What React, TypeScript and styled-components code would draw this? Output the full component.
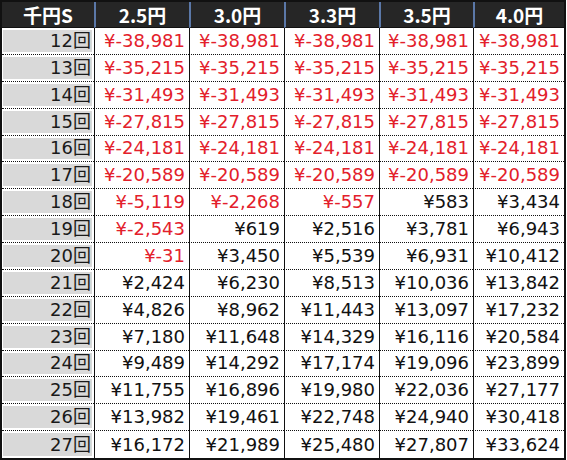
import React from 'react'
import { createGlobalStyle, styled } from 'styled-components'

const GlobalStyle = createGlobalStyle`
  html, body {
    margin: 0;
    padding: 0;
    background: #ffffff;
  }
`

const columns = ['2.5円', '3.0円', '3.3円', '3.5円', '4.0円']

const rows: { label: string; values: number[] }[] = [
  { label: '12回', values: [-38981, -38981, -38981, -38981, -38981] },
  { label: '13回', values: [-35215, -35215, -35215, -35215, -35215] },
  { label: '14回', values: [-31493, -31493, -31493, -31493, -31493] },
  { label: '15回', values: [-27815, -27815, -27815, -27815, -27815] },
  { label: '16回', values: [-24181, -24181, -24181, -24181, -24181] },
  { label: '17回', values: [-20589, -20589, -20589, -20589, -20589] },
  { label: '18回', values: [-5119, -2268, -557, 583, 3434] },
  { label: '19回', values: [-2543, 619, 2516, 3781, 6943] },
  { label: '20回', values: [-31, 3450, 5539, 6931, 10412] },
  { label: '21回', values: [2424, 6230, 8513, 10036, 13842] },
  { label: '22回', values: [4826, 8962, 11443, 13097, 17232] },
  { label: '23回', values: [7180, 11648, 14329, 16116, 20584] },
  { label: '24回', values: [9489, 14292, 17174, 19096, 23899] },
  { label: '25回', values: [11755, 16896, 19980, 22036, 27177] },
  { label: '26回', values: [13982, 19461, 22748, 24940, 30418] },
  { label: '27回', values: [16172, 21989, 25480, 27807, 33624] },
]

const formatYen = (value: number) => {
  const abs = Math.abs(value).toLocaleString('en-US')
  return value < 0 ? `¥-${abs}` : `¥${abs}`
}

const App = () => {
  return (
    <>
      <GlobalStyle />
      <Grid>
        <HeadCell first>{'千円S'}</HeadCell>
        {columns.map((c) => (
          <HeadCell key={c}>{c}</HeadCell>
        ))}
        {rows.map((row, idx) => {
          const last = idx === rows.length - 1
          return (
            <React.Fragment key={row.label}>
              <LabelCell last={last}>
                <LabelBox>{row.label}</LabelBox>
              </LabelCell>
              {row.values.map((v, i) => (
                <ValueCell key={i} negative={v < 0} last={last}>
                  {formatYen(v)}
                </ValueCell>
              ))}
            </React.Fragment>
          )
        })}
      </Grid>
    </>
  )
}

const Grid = styled.div`
  box-sizing: border-box;
  width: 566px;
  height: 460px;
  display: grid;
  grid-template-columns: 92px 95px 95px 95px 94px 91px;
  grid-template-rows: 26px repeat(16, 1fr);
  border: 2px solid #111111;
  font-family: 'DejaVu Sans', 'Noto Sans CJK JP', sans-serif;
`

const HeadCell = styled.div<{ first?: boolean }>`
  display: flex;
  align-items: center;
  justify-content: center;
  background: #262626;
  color: #ffffff;
  font-family: 'Noto Sans CJK JP', 'DejaVu Sans', sans-serif;
  font-size: 19px;
  font-weight: 700;
  line-height: 1;
  border-left: ${({ first }) => (first ? 'none' : '2px solid #5b78a8')};
  border-bottom: 1px solid #111111;
`

const LabelCell = styled.div<{ last?: boolean }>`
  box-sizing: border-box;
  display: flex;
  padding: 2px 2px 2px 1px;
  border-bottom: ${({ last }) => (last ? 'none' : '1px dotted #111111')};
  background: #ffffff;
  min-height: 0;
`

const LabelBox = styled.div`
  flex: 1;
  display: flex;
  align-items: center;
  justify-content: flex-end;
  background: #d9d9d9;
  color: #1a1a1a;
  font-size: 18px;
  line-height: 1;
  padding-right: 1px;
`

const ValueCell = styled.div<{ negative?: boolean; last?: boolean }>`
  box-sizing: border-box;
  display: flex;
  align-items: center;
  justify-content: flex-end;
  padding-right: 4px;
  border-left: 1px solid #111111;
  border-bottom: ${({ last }) => (last ? 'none' : '1px dotted #111111')};
  color: ${({ negative }) => (negative ? '#e3202b' : '#111111')};
  font-size: 18px;
  line-height: 1;
  white-space: nowrap;
  min-height: 0;
`

export default App
